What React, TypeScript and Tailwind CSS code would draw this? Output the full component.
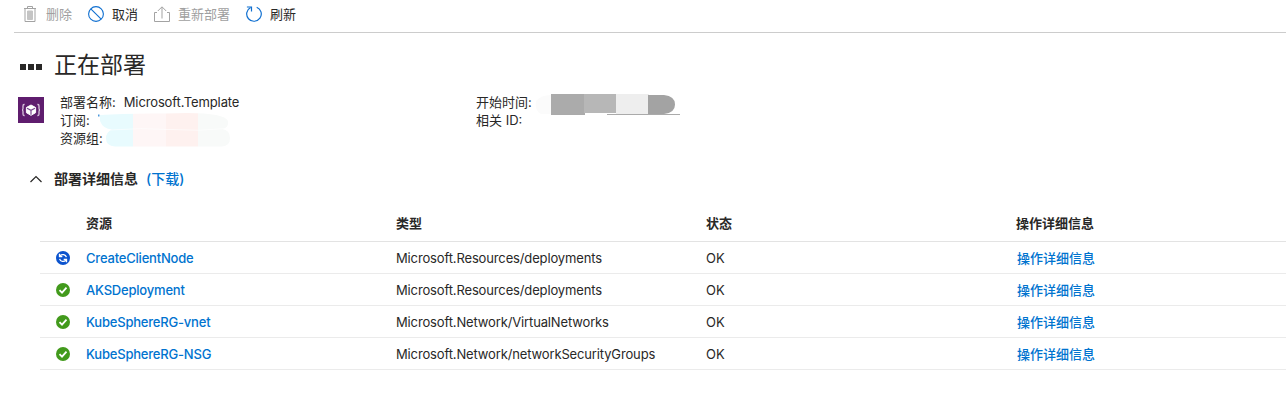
import React from "react";

const TrashIcon = () => (
  <svg width="16" height="18" viewBox="0 0 16 18" fill="none" stroke="#a3a3a3">
    <path d="M2 3.500h12M5.500 3V1.500h5V3M3 4v12.500h10V4" />
    <path d="M5.500 6h5v8.500h-5z" fill="#c4c4c4" stroke="#c4c4c4" />
  </svg>
);

const CancelIcon = () => (
  <svg width="16" height="16" viewBox="0 0 16 16" fill="none" stroke="#0f6fd0" strokeWidth="1.100">
    <circle cx="8" cy="8" r="7.400" />
    <path d="M2.800 2.800l10.400 10.400" />
  </svg>
);

const RedeployIcon = () => (
  <svg width="16" height="16" viewBox="0 0 16 16" fill="none" stroke="#a3a3a3">
    <path d="M3 6.500H.5v9h15v-9H13M8 12.500V1M3.800 5L8 .8 12.200 5" />
  </svg>
);

const RefreshIcon = () => (
  <svg width="16" height="16" viewBox="0 0 16 16" fill="none" stroke="#0f6fd0" strokeWidth="1.200">
    <path d="M10.700 1.200A7.300 7.300 0 1 1 4.600 1.500" />
    <path d="M.9 1h4.600v4.600" />
  </svg>
);

const TemplateIcon = () => (
  <svg width="26" height="26" viewBox="0 0 26 26">
    <path d="M0 0h26v26H0z" fill="#5f1d6e" />
    <path
      d="M6.600 7.500H6Q5 7.500 5 9v2.300Q5 13 4 13q1 0 1 1.700V17q0 1.500 1 1.500h.6M19.400 7.500h.6q1 0 1 1.500v2.300q0 1.700 1 1.700-1 0-1 1.700V17q0 1.500-1 1.500h-.6"
      fill="none"
      stroke="#d9c6de"
      strokeWidth="1.300"
    />
    <path d="M13 8l4.600 2.500v5.200L13 18.300l-4.600-2.600v-5.200z" fill="#fff" stroke="#fff" strokeLinejoin="round" />
    <path d="M9 11.200l4 2.200 4-2.200M13 13.200v4.600" fill="none" stroke="#7a4690" strokeWidth="1.200" />
  </svg>
);

const RunningIcon = () => (
  <svg width="14" height="14" viewBox="0 0 14 14">
    <circle cx="7" cy="7" r="7" fill="#0b53ce" />
    <g fill="none" stroke="#fff" strokeWidth="1.300">
      <path d="M4 4.700C6 2.800 9.600 3.300 10.400 6.200M10 9.300C8 11.200 4.400 10.700 3.600 7.800" />
      <path d="M3.500 2.800v2.700h2.800M10.500 11.200V8.500H7.700" />
    </g>
  </svg>
);

const SuccessIcon = () => (
  <svg width="14" height="14" viewBox="0 0 14 14">
    <circle cx="7" cy="7" r="7" fill="#429a1c" />
    <path d="M3.500 7.200l2.500 2.500 4.500-5" fill="none" stroke="#fff" strokeWidth="1.800" />
  </svg>
);

const rows = [
  { name: "CreateClientNode", type: "Microsoft.Resources/deployments", running: true },
  { name: "AKSDeployment", type: "Microsoft.Resources/deployments", running: false },
  { name: "KubeSphereRG-vnet", type: "Microsoft.Network/VirtualNetworks", running: false },
  { name: "KubeSphereRG-NSG", type: "Microsoft.Network/networkSecurityGroups", running: false },
];

const columns = "grid grid-cols-[46px_310px_310px_310px_1fr] items-center border-b";

export default function App() {
  return (
    <div className="h-[420px] overflow-hidden bg-white font-['Inter','Noto_Sans_CJK_SC',sans-serif] text-[13px] leading-[18px] text-[#292827]">
      <div className="ml-[14px] flex h-[33px] items-center border-b border-[#cccccc] pb-1 pl-2">
        <div className="flex w-[66px] items-center gap-2 text-[#a0a0a0]">
          <TrashIcon />
          <span>删除</span>
        </div>
        <div className="flex w-[66px] items-center gap-2">
          <CancelIcon />
          <span>取消</span>
        </div>
        <div className="flex w-[92px] items-center gap-2 text-[#a0a0a0]">
          <RedeployIcon />
          <span>重新部署</span>
        </div>
        <div className="flex items-center gap-2">
          <RefreshIcon />
          <span>刷新</span>
        </div>
      </div>

      <div className="flex h-[60px] items-center pl-5 pt-1">
        <div className="mr-3 flex gap-[2px] pt-1">
          <i className="size-[6px] bg-[#292827]" />
          <i className="size-[6px] bg-[#292827]" />
          <i className="size-[6px] bg-[#292827]" />
        </div>
        <h1 className="text-[23px] leading-8">正在部署</h1>
      </div>

      <div className="flex h-[54px] pl-[18px]">
        <div className="w-[42px] pt-1">
          <TemplateIcon />
        </div>
        <div className="w-[416px]">
          <div className="flex gap-2">
            <span>部署名称:</span>
            <span className="tracking-[-0.13px]">Microsoft.Template</span>
          </div>
          <div className="relative">
            订阅:
            <svg className="absolute left-[36px] top-px" width="140" height="36" viewBox="0 0 140 36">
              <defs>
                <clipPath id="redacted">
                  <path d="M4 3Q30 1 70 1.500Q128 -1 132 9Q133 16 126 17Q134 18 134 26Q134 34 126 34.500H19Q10 34 10 26.500Q10 20 16 17.500Q7 17 4 9Z" />
                </clipPath>
              </defs>
              <g clipPath="url(#redacted)">
                <path d="M0 0h37v36H0z" fill="#e8fbfe" />
                <path d="M37 0h33v36H37z" fill="#fef6f6" />
                <path d="M70 0h32v36H70z" fill="#fef1ef" />
                <path d="M102 0h38v36h-38z" fill="#f8faf9" />
                <path d="M14 18Q45 15.500 74 17.500T130 16.500" fill="none" stroke="#fff" strokeOpacity=".6" />
              </g>
              <path d="M2 2.500h1.500v2H2z" fill="#4c99dc" />
            </svg>
          </div>
          <div>资源组:</div>
        </div>
        <div>
          <div className="relative">
            开始时间:
            <svg className="absolute left-[56px] top-px" width="150" height="24" viewBox="0 0 150 24">
              <path d="M19 1q-10 0-15 6-2 9 5 13h10z" fill="#fbfbfb" />
              <path d="M19 0h34v20H19z" fill="#ababab" />
              <path d="M52 0h33v19H52z" fill="#b7b7b7" />
              <path d="M84 0h33v20H84z" fill="#eeeeee" />
              <path d="M116 1h16q11 1 11 9.500t-11 9.500h-16z" fill="#a3a3a3" />
              <path d="M19 20.500h34M75 20.500h73" stroke="#aaaaaa" />
            </svg>
          </div>
          <div>相关 ID:</div>
        </div>
      </div>

      <div className="flex h-[59px] items-center pl-[30px] pt-1">
        <svg className="mt-px" width="12" height="8" viewBox="0 0 12 8" fill="none" stroke="#292827" strokeWidth="1.200">
          <path d="M.5 7L6 1.500 11.500 7" />
        </svg>
        <h2 className="ml-3 text-[14px] font-bold">部署详细信息</h2>
        <a className="ml-2 text-[14px] font-medium text-[#0073cf]">(下载)</a>
      </div>

      <div className="ml-10">
        <div className={`${columns} h-[36px] border-[#e3e3e3] pb-[2px] font-bold`}>
          <span />
          <span>资源</span>
          <span>类型</span>
          <span>状态</span>
          <span>操作详细信息</span>
        </div>
        {rows.map((row) => (
          <div key={row.name} className={`${columns} h-8 border-[#ebebeb]`}>
            <span className="pl-4">{row.running ? <RunningIcon /> : <SuccessIcon />}</span>
            <a className="font-medium tracking-[-0.2px] text-[#0073cf]">{row.name}</a>
            <span className="tracking-[-0.14px]">{row.type}</span>
            <span>OK</span>
            <a className="pl-px font-medium text-[#0073cf]">操作详细信息</a>
          </div>
        ))}
      </div>
    </div>
  );
}
